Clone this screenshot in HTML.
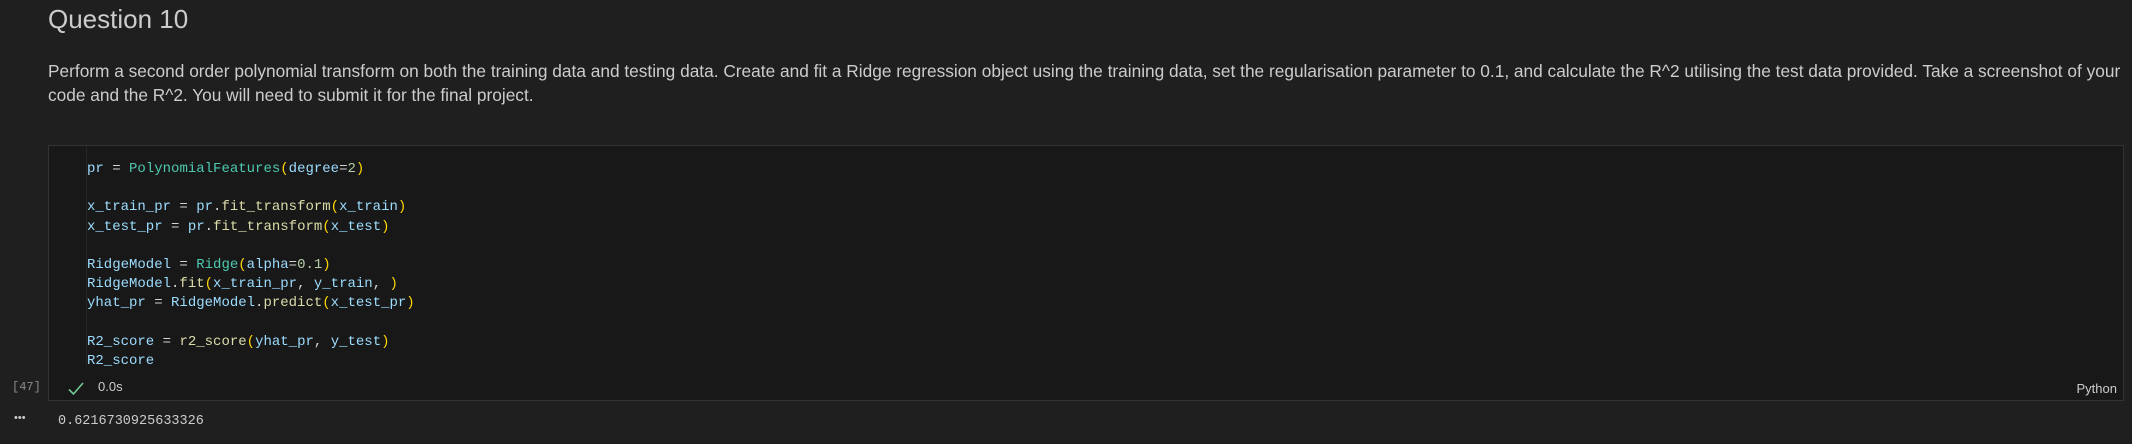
<!DOCTYPE html>
<html><head><meta charset="utf-8"><style>
html,body{margin:0;padding:0;width:2132px;height:444px;background:#1f1f1f;overflow:hidden;font-family:"Liberation Sans",sans-serif;color:#cccccc}
.h{position:absolute;left:48px;top:2px;font-size:26px;line-height:34px;color:#cccccc}
.p{position:absolute;left:48px;top:60px;font-size:17.3px;line-height:23.5px;color:#cccccc;white-space:nowrap}
.cell{position:absolute;left:48px;top:145px;width:2074px;height:254px;background:#181818;border:1px solid #333}
.gut{position:absolute;left:37px;top:0;width:1px;height:220px;background:#262626}
.code{position:absolute;left:38px;top:14px;font-family:"Liberation Mono",monospace;font-size:14px;line-height:19.2px;white-space:pre;color:#d4d4d4}
.v{color:#9cdcfe}.c{color:#4ec9b0}.f{color:#dcdcaa}.n{color:#b5cea8}.b{color:#ffd700}
.st{position:absolute;left:0;top:233px;font-size:13px;color:#ccc}
.ex{position:absolute;left:12px;top:380px;font-family:"Liberation Mono",monospace;font-size:12px;color:#8a8a8a}
.py{position:absolute;right:6px;top:235px;font-size:13px;color:#cccccc}
.out{position:absolute;left:58px;top:414px;font-family:"Liberation Mono",monospace;font-size:13.5px;color:#cccccc}
.dots{position:absolute;left:14px;top:412px;font-size:11px;color:#ccc;letter-spacing:0px}
</style></head><body>
<div class="h">Question 10</div>
<div class="p">Perform a second order polynomial transform on both the training data and testing data. Create and fit a Ridge regression object using the training data, set the regularisation parameter to 0.1, and calculate the R^2 utilising the test data provided. Take a screenshot of your<br>code and the R^2. You will need to submit it for the final project.</div>
<div class="ex">[47]</div>
<div class="cell">
<div class="gut"></div>
<div class="code"><span class="v">pr</span> = <span class="c">PolynomialFeatures</span><span class="b">(</span><span class="v">degree</span>=<span class="n">2</span><span class="b">)</span>

<span class="v">x_train_pr</span> = <span class="v">pr</span>.<span class="f">fit_transform</span><span class="b">(</span><span class="v">x_train</span><span class="b">)</span>
<span class="v">x_test_pr</span> = <span class="v">pr</span>.<span class="f">fit_transform</span><span class="b">(</span><span class="v">x_test</span><span class="b">)</span>

<span class="v">RidgeModel</span> = <span class="c">Ridge</span><span class="b">(</span><span class="v">alpha</span>=<span class="n">0.1</span><span class="b">)</span>
<span class="v">RidgeModel</span>.<span class="f">fit</span><span class="b">(</span><span class="v">x_train_pr</span>, <span class="v">y_train</span>, <span class="b">)</span>
<span class="v">yhat_pr</span> = <span class="v">RidgeModel</span>.<span class="f">predict</span><span class="b">(</span><span class="v">x_test_pr</span><span class="b">)</span>

<span class="v">R2_score</span> = <span class="f">r2_score</span><span class="b">(</span><span class="v">yhat_pr</span>, <span class="v">y_test</span><span class="b">)</span>
<span class="v">R2_score</span></div>
<svg style="position:absolute;left:18px;top:235px" width="18" height="16" viewBox="0 0 18 16"><path d="M2 8.5 L6.5 13 L16 2" fill="none" stroke="#73c991" stroke-width="1.6"/></svg>
<div class="st" style="left:49px">0.0s</div>
<div class="py">Python</div>
</div>
<div class="dots">•••</div>
<div class="out">0.6216730925633326</div>
</body></html>
